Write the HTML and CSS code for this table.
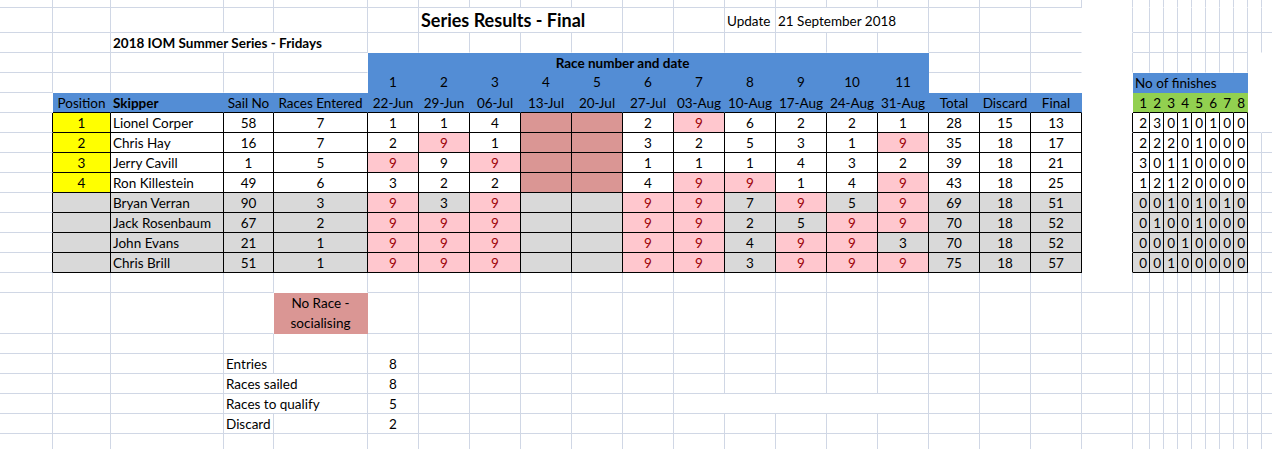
FILE: index.html
```html
<!DOCTYPE html>
<html lang="en">
<head>
<meta charset="utf-8">
<title>Series Results - Final</title>
<link rel="stylesheet" href="styles.css">
</head>
<body>
<div class="sheet">
  <div class="row r1">
    <i></i><i></i><i></i><i></i><i></i><i></i><i></i><i></i><i></i><i></i><i></i><i></i><i></i><i></i><i></i><i></i><i></i><i></i><i></i>
    <i class="nb"></i><i class="nb"></i><i class="nb"></i><i class="nb"></i><i class="nb"></i><i class="nb"></i><i class="nb"></i><i class="nb"></i><i class="nb"></i><i class="nb"></i><i class="nb"></i>
  </div>
  <div class="row r2">
    <i></i><i></i><i></i><i></i><i></i><i></i>
    <div class="s4 title">Series Results - Final</div>
    <i></i><i></i>
    <div class="t2">Update</div>
    <div class="s3 t2">21 September 2018</div>
    <i></i><i></i><i class="nr"></i>
    <i class="tw"></i>
    <i></i><i></i><i></i><i></i><i></i><i></i><i></i><i></i><i></i><i></i>
  </div>
  <div class="row">
    <i></i><i></i>
    <div class="s3 bold">2018 IOM Summer Series - Fridays</div>
    <i class="nb"></i><i class="nb"></i><i class="nb"></i><i class="nb"></i><i class="nb"></i><i class="nb"></i><i class="nb"></i><i class="nb"></i><i class="nb"></i><i class="nb"></i><i class="nb"></i>
    <i></i><i></i><i class="nr"></i>
    <i class="tw"></i>
    <i></i><i></i><i></i><i></i><i></i><i></i><i></i><i></i>
    <i class="nb"></i><i class="nb"></i>
  </div>
  <div class="row">
    <i></i><i></i><i></i><i></i><i class="nr"></i>
    <div class="s10 blue bold c">Race number and date</div>
    <i class="blue"></i>
    <i></i><i></i><i class="nr"></i>
    <i class="tw"></i>
    <i class="nb"></i><i class="nb"></i><i class="nb"></i><i class="nb"></i><i class="nb"></i><i class="nb"></i><i class="nb"></i><i class="nb"></i>
    <i class="wh"></i><i class="wh"></i>
  </div>
  <div class="row">
    <i></i><i class="nb"></i><i class="nb"></i><i class="nb"></i><i class="nb nr"></i>
    <div class="blue c num">1</div><div class="blue c num">2</div><div class="blue c num">3</div><div class="blue c num">4</div><div class="blue c num">5</div><div class="blue c num">6</div><div class="blue c num">7</div><div class="blue c num">8</div><div class="blue c num">9</div><div class="blue c num">10</div><div class="blue c num">11</div>
    <i class="nb"></i><i class="nb"></i><i class="nb nr"></i>
    <i class="tw nr"></i>
    <div class="s8 blue">No of finishes</div>
    <i class="wh"></i><i class="wh"></i>
  </div>
  <div class="row">
    <i class="nr"></i>
    <div class="blue kb c">Position</div>
    <div class="blue kb bold">Skipper</div>
    <div class="blue kb c">Sail No</div>
    <div class="blue kb c">Races Entered</div>
    <div class="blue kb c">22-Jun</div><div class="blue kb c">29-Jun</div><div class="blue kb c">06-Jul</div><div class="blue kb c">13-Jul</div><div class="blue kb c">20-Jul</div><div class="blue kb c">27-Jul</div><div class="blue kb c">03-Aug</div><div class="blue kb c">10-Aug</div><div class="blue kb c">17-Aug</div><div class="blue kb c">24-Aug</div><div class="blue kb c">31-Aug</div>
    <div class="blue kb c">Total</div><div class="blue kb c">Discard</div><div class="blue kb c">Final</div>
    <i class="tw nr"></i>
    <div class="green r">1</div><div class="green r">2</div><div class="green r">3</div><div class="green r">4</div><div class="green r">5</div><div class="green r">6</div><div class="green r">7</div><div class="green r">8</div>
    <i class="wh"></i><i class="wh"></i>
  </div>

  <div class="row">
    <i class="kr"></i>
    <div class="k c yel">1</div><div class="k">Lionel Corper</div><div class="k c">58</div><div class="k c">7</div>
    <div class="k c">1</div><div class="k c">1</div><div class="k c">4</div><i class="k nrace"></i><i class="k nrace"></i><div class="k c">2</div><div class="k c pk">9</div><div class="k c">6</div><div class="k c">2</div><div class="k c">2</div><div class="k c">1</div>
    <div class="k c">28</div><div class="k c">15</div><div class="k c">13</div>
    <i class="tw kr"></i>
    <div class="k r">2</div><div class="k r">3</div><div class="k r">0</div><div class="k r">1</div><div class="k r">0</div><div class="k r">1</div><div class="k r">0</div><div class="k r">0</div>
    <i class="nr"></i><i></i>
  </div>
  <div class="row">
    <i class="kr"></i>
    <div class="k c yel">2</div><div class="k">Chris Hay</div><div class="k c">16</div><div class="k c">7</div>
    <div class="k c">2</div><div class="k c pk">9</div><div class="k c">1</div><i class="k nrace"></i><i class="k nrace"></i><div class="k c">3</div><div class="k c">2</div><div class="k c">5</div><div class="k c">3</div><div class="k c">1</div><div class="k c pk">9</div>
    <div class="k c">35</div><div class="k c">18</div><div class="k c">17</div>
    <i class="tw kr"></i>
    <div class="k r">2</div><div class="k r">2</div><div class="k r">2</div><div class="k r">0</div><div class="k r">1</div><div class="k r">0</div><div class="k r">0</div><div class="k r">0</div>
    <i></i><i></i>
  </div>
  <div class="row">
    <i class="kr"></i>
    <div class="k c yel">3</div><div class="k">Jerry Cavill</div><div class="k c">1</div><div class="k c">5</div>
    <div class="k c pk">9</div><div class="k c">9</div><div class="k c pk">9</div><i class="k nrace"></i><i class="k nrace"></i><div class="k c">1</div><div class="k c">1</div><div class="k c">1</div><div class="k c">4</div><div class="k c">3</div><div class="k c">2</div>
    <div class="k c">39</div><div class="k c">18</div><div class="k c">21</div>
    <i class="tw kr"></i>
    <div class="k r">3</div><div class="k r">0</div><div class="k r">1</div><div class="k r">1</div><div class="k r">0</div><div class="k r">0</div><div class="k r">0</div><div class="k r">0</div>
    <i></i><i></i>
  </div>
  <div class="row">
    <i class="kr"></i>
    <div class="k c yel">4</div><div class="k">Ron Killestein</div><div class="k c">49</div><div class="k c">6</div>
    <div class="k c">3</div><div class="k c">2</div><div class="k c">2</div><i class="k nrace"></i><i class="k nrace"></i><div class="k c">4</div><div class="k c pk">9</div><div class="k c pk">9</div><div class="k c">1</div><div class="k c">4</div><div class="k c pk">9</div>
    <div class="k c">43</div><div class="k c">18</div><div class="k c">25</div>
    <i class="tw kr"></i>
    <div class="k r">1</div><div class="k r">2</div><div class="k r">1</div><div class="k r">2</div><div class="k r">0</div><div class="k r">0</div><div class="k r">0</div><div class="k r">0</div>
    <i></i><i></i>
  </div>
  <div class="row">
    <i class="kr"></i>
    <i class="k gr"></i><div class="k gr">Bryan Verran</div><div class="k c gr">90</div><div class="k c gr">3</div>
    <div class="k c pk">9</div><div class="k c gr">3</div><div class="k c pk">9</div><i class="k gr"></i><i class="k gr"></i><div class="k c pk">9</div><div class="k c pk">9</div><div class="k c gr">7</div><div class="k c pk">9</div><div class="k c gr">5</div><div class="k c pk">9</div>
    <div class="k c gr">69</div><div class="k c gr">18</div><div class="k c gr">51</div>
    <i class="tw kr"></i>
    <div class="k r gr">0</div><div class="k r gr">0</div><div class="k r gr">1</div><div class="k r gr">0</div><div class="k r gr">1</div><div class="k r gr">0</div><div class="k r gr">1</div><div class="k r gr">0</div>
    <i></i><i></i>
  </div>
  <div class="row">
    <i class="kr"></i>
    <i class="k gr"></i><div class="k gr">Jack Rosenbaum</div><div class="k c gr">67</div><div class="k c gr">2</div>
    <div class="k c pk">9</div><div class="k c pk">9</div><div class="k c pk">9</div><i class="k gr"></i><i class="k gr"></i><div class="k c pk">9</div><div class="k c pk">9</div><div class="k c gr">2</div><div class="k c gr">5</div><div class="k c pk">9</div><div class="k c pk">9</div>
    <div class="k c gr">70</div><div class="k c gr">18</div><div class="k c gr">52</div>
    <i class="tw kr"></i>
    <div class="k r gr">0</div><div class="k r gr">1</div><div class="k r gr">0</div><div class="k r gr">0</div><div class="k r gr">1</div><div class="k r gr">0</div><div class="k r gr">0</div><div class="k r gr">0</div>
    <i></i><i></i>
  </div>
  <div class="row">
    <i class="kr"></i>
    <i class="k gr"></i><div class="k gr">John Evans</div><div class="k c gr">21</div><div class="k c gr">1</div>
    <div class="k c pk">9</div><div class="k c pk">9</div><div class="k c pk">9</div><i class="k gr"></i><i class="k gr"></i><div class="k c pk">9</div><div class="k c pk">9</div><div class="k c gr">4</div><div class="k c pk">9</div><div class="k c pk">9</div><div class="k c gr">3</div>
    <div class="k c gr">70</div><div class="k c gr">18</div><div class="k c gr">52</div>
    <i class="tw kr"></i>
    <div class="k r gr">0</div><div class="k r gr">0</div><div class="k r gr">0</div><div class="k r gr">1</div><div class="k r gr">0</div><div class="k r gr">0</div><div class="k r gr">0</div><div class="k r gr">0</div>
    <i></i><i></i>
  </div>
  <div class="row">
    <i class="kr"></i>
    <i class="k gr"></i><div class="k gr">Chris Brill</div><div class="k c gr">51</div><div class="k c gr">1</div>
    <div class="k c pk">9</div><div class="k c pk">9</div><div class="k c pk">9</div><i class="k gr"></i><i class="k gr"></i><div class="k c pk">9</div><div class="k c pk">9</div><div class="k c gr">3</div><div class="k c pk">9</div><div class="k c pk">9</div><div class="k c pk">9</div>
    <div class="k c gr">75</div><div class="k c gr">18</div><div class="k c gr">57</div>
    <i class="tw kr"></i>
    <div class="k r gr">0</div><div class="k r gr">0</div><div class="k r gr">1</div><div class="k r gr">0</div><div class="k r gr">0</div><div class="k r gr">0</div><div class="k r gr">0</div><div class="k r gr">0</div>
    <i></i><i></i>
  </div>

  <div class="row">
    <i></i><i></i><i></i><i></i><i class="nb"></i><i></i><i></i><i></i><i></i><i></i><i></i><i></i><i></i><i></i><i></i><i></i><i></i><i></i><i></i><i></i><i></i><i></i><i></i><i></i><i></i><i></i><i></i><i></i><i></i><i></i>
  </div>
  <div class="row r16">
    <i></i><i></i><i></i><i class="nr"></i>
    <div class="nrc">No Race - socialising</div>
    <i></i><i></i><i></i><i></i><i></i><i></i><i></i><i></i><i></i><i></i><i></i><i></i><i></i><i></i><i></i><i></i><i></i><i></i><i></i><i></i><i></i><i></i><i></i><i></i><i></i>
  </div>
  <div class="row">
    <i></i><i></i><i></i><i></i><i></i><i></i><i></i><i></i><i></i><i></i><i></i><i></i><i></i><i></i><i></i><i></i><i></i><i></i><i></i><i></i><i></i><i></i><i></i><i></i><i></i><i></i><i></i><i></i><i></i><i></i>
  </div>
  <div class="row">
    <i></i><i></i><i></i>
    <div>Entries</div><i></i><div class="c">8</div>
    <i></i><i></i><i></i><i></i><i></i><i></i><i></i><i></i><i></i><i></i><i></i><i></i><i></i><i></i><i></i><i></i><i></i><i></i><i></i><i></i><i></i><i></i><i></i><i></i>
  </div>
  <div class="row">
    <i></i><i></i><i></i>
    <div class="s2">Races sailed</div><div class="c">8</div>
    <i></i><i></i><i></i><i></i><i></i><i></i><i></i><i></i><i></i><i></i><i></i><i></i><i></i><i></i><i></i><i></i><i></i><i></i><i></i><i></i><i></i><i></i><i></i><i></i>
  </div>
  <div class="row">
    <i></i><i></i><i></i>
    <div class="s2">Races to qualify</div><div class="c">5</div>
    <i></i><i></i><i></i><i></i><i></i>
    <i class="s5"></i>
    <i></i><i></i><i></i><i></i><i></i><i></i><i></i><i></i><i></i><i></i><i></i><i></i><i></i><i></i>
  </div>
  <div class="row">
    <i></i><i></i><i></i>
    <div>Discard</div><i></i><div class="c">2</div>
    <i></i><i></i><i></i><i></i><i></i><i></i><i></i><i></i><i></i><i></i><i></i><i></i><i></i><i></i><i></i><i></i><i></i><i></i><i></i><i></i><i></i><i></i><i></i><i></i>
  </div>
  <div class="row">
    <i></i><i></i><i></i><i></i><i></i><i></i><i></i><i></i><i></i><i></i><i></i><i></i><i></i><i></i><i></i><i></i><i></i><i></i><i></i><i></i><i></i><i></i><i></i><i></i><i></i><i></i><i></i><i></i><i></i><i></i>
  </div>
</div>
</body>
</html>
```

FILE: styles.css
```css
* { box-sizing: border-box; margin: 0; padding: 0; }
html, body { background: #fff; }
body {
  width: 1272px;
  height: 449px;
  overflow: hidden;
  font-family: Lato, "Liberation Sans", sans-serif;
  font-size: 13.5px;
  color: #000;
}
.sheet { display: flex; flex-direction: column; width: 1276px; }
.row {
  display: grid;
  grid-template-columns: 53px 58px 113px 50px 94px repeat(15, 51px) 17px repeat(9, 14px);
  height: 20px;
}
.r1 { height: 8px; }
.r2 { height: 25px; }
.r16 { height: 41px; }
.row > * {
  display: flex;
  align-items: flex-end;
  min-width: 0;
  padding: 0 2px 1px;
  border-right: 1px solid #d0d7e5;
  border-bottom: 1px solid #d0d7e5;
  white-space: nowrap;
  line-height: 16px;
  font-style: normal;
}
.s2 { grid-column: span 2; }
.s3 { grid-column: span 3; }
.s4 { grid-column: span 4; }
.s5 { grid-column: span 5; }
.s8 { grid-column: span 8; }
.s10 { grid-column: span 10; }
.c { justify-content: center; }
.r { justify-content: flex-end; }
.bold { font-weight: 700; }
.row > .title { font-weight: 700; font-size: 18px; padding-bottom: 4px; }
.row > .t2 { padding-bottom: 3px; }
.row > .num { padding-bottom: 2px; }
.nb { border-bottom-color: transparent; }
.nr { border-right-color: transparent; }
.tw { border-bottom-color: transparent; }
.wh { border-color: transparent; }
.blue { background: #538dd5; border-color: transparent; }
.kb { border-bottom-color: #000; }
.green { background: #92d050; border-right-color: transparent; border-bottom-color: #000; }
.k { border-color: #000; }
.kr { border-right-color: #000; }
.yel { background: #ffff00; }
.gr { background: #d9d9d9; }
.pk { background: #ffc7ce; color: #9c0006; }
.nrace { background: #da9694; }
.row > .nrc {
  background: #da9694;
  border-color: transparent;
  white-space: normal;
  text-align: center;
  justify-content: center;
  line-height: 20px;
  padding-bottom: 0;
}
```
